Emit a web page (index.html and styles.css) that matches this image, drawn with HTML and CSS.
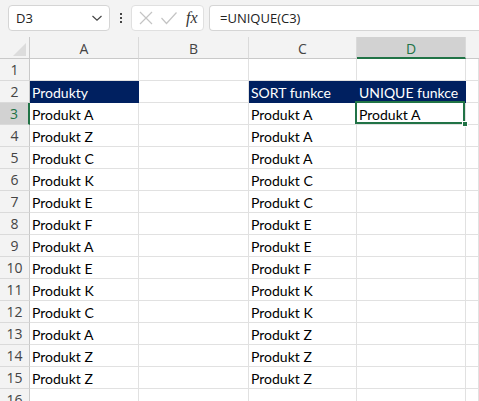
FILE: index.html
```html
<!DOCTYPE html>
<html>
<head>
<meta charset="utf-8">
<link rel="stylesheet" href="styles.css">
</head>
<body>
<div class="app">
  <div class="toolbar">
    <div class="namebox">
      <span class="ref">D3</span>
      <svg class="chev" width="12" height="8" viewBox="0 0 12 8"><path d="M1.5 2 L6 6.2 L10.5 2" fill="none" stroke="#444" stroke-width="1.2"/></svg>
    </div>
    <div class="dots"><span></span><span></span><span></span></div>
    <div class="fxbox">
      <svg width="16" height="16" viewBox="0 0 16 16"><path d="M2 2 L14 14 M14 2 L2 14" stroke="#c4c4c4" stroke-width="1.2" fill="none"/></svg>
      <svg width="18" height="16" viewBox="0 0 18 16"><path d="M1.5 8 L6.5 13.5 L16.5 2.5" stroke="#c4c4c4" stroke-width="1.2" fill="none"/></svg>
      <span class="fx">fx</span>
    </div>
    <div class="formula">=UNIQUE(C3)</div>
  </div>
  <div class="sheet">
    <div class="ch corner"><span class="tri"></span></div>
    <div class="ch">A</div>
    <div class="ch">B</div>
    <div class="ch">C</div>
    <div class="ch sel">D</div>
    <div class="ch last"></div>

    <div class="rh">1</div><div class="c"></div><div class="c"></div><div class="c"></div><div class="c"></div><div class="c"></div>
    <div class="rh">2</div><div class="c hd">Produkty</div><div class="c"></div><div class="c hd hdl">SORT funkce</div><div class="c hd">UNIQUE funkce</div><div class="c"></div>
    <div class="rh rsel">3</div><div class="c">Produkt A</div><div class="c"></div><div class="c">Produkt A</div><div class="c active">Produkt A<span class="handle"></span></div><div class="c"></div>
    <div class="rh">4</div><div class="c">Produkt Z</div><div class="c"></div><div class="c">Produkt A</div><div class="c"></div><div class="c"></div>
    <div class="rh">5</div><div class="c">Produkt C</div><div class="c"></div><div class="c">Produkt A</div><div class="c"></div><div class="c"></div>
    <div class="rh">6</div><div class="c">Produkt K</div><div class="c"></div><div class="c">Produkt C</div><div class="c"></div><div class="c"></div>
    <div class="rh">7</div><div class="c">Produkt E</div><div class="c"></div><div class="c">Produkt C</div><div class="c"></div><div class="c"></div>
    <div class="rh">8</div><div class="c">Produkt F</div><div class="c"></div><div class="c">Produkt E</div><div class="c"></div><div class="c"></div>
    <div class="rh">9</div><div class="c">Produkt A</div><div class="c"></div><div class="c">Produkt E</div><div class="c"></div><div class="c"></div>
    <div class="rh">10</div><div class="c">Produkt E</div><div class="c"></div><div class="c">Produkt F</div><div class="c"></div><div class="c"></div>
    <div class="rh">11</div><div class="c">Produkt K</div><div class="c"></div><div class="c">Produkt K</div><div class="c"></div><div class="c"></div>
    <div class="rh">12</div><div class="c">Produkt C</div><div class="c"></div><div class="c">Produkt K</div><div class="c"></div><div class="c"></div>
    <div class="rh">13</div><div class="c">Produkt A</div><div class="c"></div><div class="c">Produkt Z</div><div class="c"></div><div class="c"></div>
    <div class="rh">14</div><div class="c">Produkt Z</div><div class="c"></div><div class="c">Produkt Z</div><div class="c"></div><div class="c"></div>
    <div class="rh">15</div><div class="c">Produkt Z</div><div class="c"></div><div class="c">Produkt Z</div><div class="c"></div><div class="c"></div>
    <div class="rh">16</div><div class="c"></div><div class="c"></div><div class="c"></div><div class="c"></div><div class="c"></div>
  </div>
</div>
</body>
</html>
```

FILE: styles.css
```css
* { box-sizing: border-box; }
html, body { margin: 0; padding: 0; background: #fff; }
body { width: 479px; height: 401px; overflow: hidden; }
.app { width: 479px; height: 401px; overflow: hidden; }

.toolbar {
  height: 37px;
  background: #f3f3f3;
  display: flex;
  align-items: flex-start;
  padding: 5px 0 0 8px;
  font-family: "Segoe UI", "Open Sans", "Liberation Sans", sans-serif;
}
.namebox {
  width: 102px;
  height: 26px;
  background: #fff;
  border: 1px solid #d5d5d5;
  border-radius: 4px;
  display: flex;
  align-items: center;
  justify-content: space-between;
  padding: 0 6px 0 7px;
  font-size: 13px;
  color: #222;
}
.dots {
  width: 21px;
  height: 26px;
  display: flex;
  flex-direction: column;
  align-items: center;
  justify-content: center;
  gap: 2px;
}
.dots span { width: 2px; height: 2px; background: #444; display: block; }
.fxbox {
  width: 73px;
  height: 26px;
  background: #fff;
  border: 1px solid #e0e0e0;
  border-radius: 4px;
  display: flex;
  align-items: center;
  padding: 0 4px 0 6px;
  gap: 6px;
}
.fx {
  font-family: "Liberation Serif", "DejaVu Serif", serif;
  font-style: italic;
  font-size: 16px;
  color: #333;
  margin-left: 2px;
}
.formula {
  flex: 1;
  margin-left: 5px;
  height: 26px;
  background: #fff;
  border: 1px solid #d5d5d5;
  border-right: none;
  border-radius: 4px 0 0 4px;
  display: flex;
  align-items: center;
  padding-left: 10px;
  font-size: 13px;
  color: #222;
}

.sheet {
  display: grid;
  grid-template-columns: 30px 109px 110px 108px 109px 1fr;
  grid-auto-rows: 22px;
  font-family: "Lato", "Liberation Sans", sans-serif;
}
.ch {
  background: #f3f3f3;
  border-right: 1px solid #dadada;
  border-bottom: 1px solid #c9c9c9;
  display: flex;
  align-items: center;
  justify-content: center;
  font-family: "Segoe UI", "Open Sans", "Liberation Sans", sans-serif;
  font-size: 14px;
  color: #444;
  padding-top: 1px;
}
.ch.last { border-right: none; }
.ch.corner { position: relative; border-right: 1px solid #c9c9c9; }
.tri {
  position: absolute;
  right: 3px;
  bottom: 2px;
  width: 0; height: 0;
  border-left: 13px solid transparent;
  border-bottom: 13px solid #dcdcdc;
}
.ch.sel {
  background: #d2d2d2;
  color: #217346;
  border-bottom: 2px solid #217346;
  padding-top: 2px;
}
.rh {
  background: #f3f3f3;
  border-right: 1px solid #c9c9c9;
  border-bottom: 1px solid #dadada;
  display: flex;
  align-items: center;
  justify-content: center;
  font-family: "Segoe UI", "Open Sans", "Liberation Sans", sans-serif;
  font-size: 14px;
  color: #444;
}
.rh.rsel {
  background: #d2d2d2;
  color: #217346;
  border-right: 2px solid #217346;
}
.c {
  border-right: 1px solid #e1e1e1;
  border-bottom: 1px solid #e1e1e1;
  display: flex;
  align-items: center;
  padding: 1px 0 0 2px;
  font-size: 14px;
  color: #000;
  white-space: nowrap;
}
.c.hd {
  background: #002060;
  color: #fff;
  border-color: #002060;
}
.c.hdl { border-right-color: #002060; }
.c.active { position: relative; }
.c.active::after {
  content: "";
  position: absolute;
  left: -2px; top: -2px; right: 0; bottom: 0;
  border: 2px solid #217346;
}
.handle {
  position: absolute;
  right: -3px;
  bottom: -3px;
  width: 6px;
  height: 6px;
  background: #217346;
  border: 1px solid #fff;
  z-index: 2;
}
```
